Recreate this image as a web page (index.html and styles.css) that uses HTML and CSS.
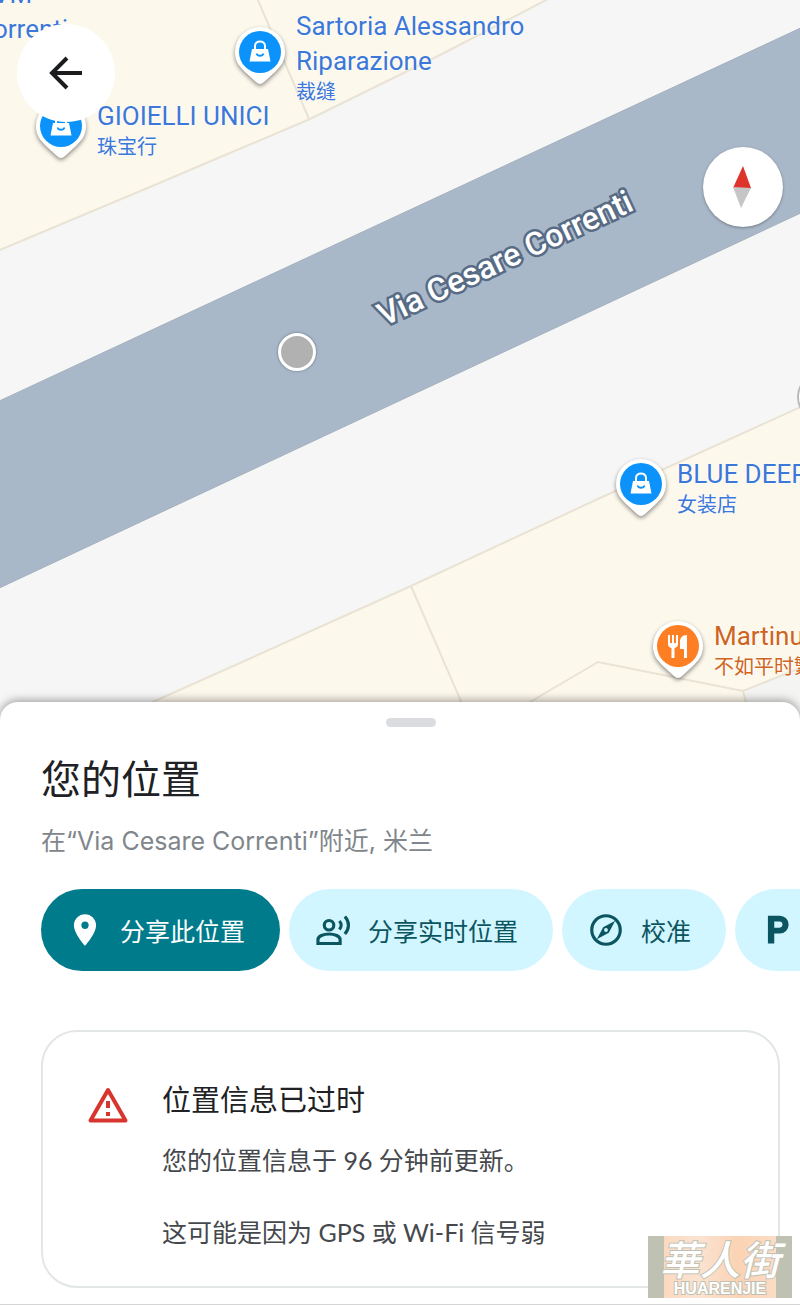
FILE: index.html
```html
<!DOCTYPE html>
<html lang="zh-CN">
<head>
    <meta charset="UTF-8">
    <meta name="viewport" content="width=device-width, initial-scale=1.0">
    <title>您的位置</title>
    <link rel="stylesheet" href="styles.css">
</head>
<body>
    <!-- 图标 -->
    <svg class="sprite" aria-hidden="true">
        <symbol id="pin-shape" viewBox="0 0 56 64">
            <path d="M28 3a25 25 0 0 0-25 25c0 9 4 14 10 20l11 10q4 4 8 0l11-10c6-6 10-11 10-20a25 25 0 0 0-25-25z" fill="#fff"/>
        </symbol>
        <symbol id="pin-shop" viewBox="0 0 56 64">
            <use href="#pin-shape"/>
            <circle cx="28" cy="28" r="21" fill="#0b93fb"/>
            <path d="M20 25h16l2.500 12.500h-21z" fill="#fff"/>
            <path d="M23 26v-4c0-6 10-6 10 0v4" fill="none" stroke="#fff" stroke-width="2"/>
            <path d="M24.500 29.500c1 3 6 3 7 0" fill="none" stroke="#0b93fb" stroke-width="1.800"/>
        </symbol>
        <symbol id="pin-food" viewBox="0 0 56 64">
            <use href="#pin-shape"/>
            <circle cx="28" cy="28" r="21" fill="#fd7e23"/>
            <path d="M18 17h2v8h2v-8h2v8h2v-8h2v9q0 3-3.500 4v10h-3v-10q-3.500-1-3.500-4zM34 40v-9H30v-7c0-4 2-7 7-7v23z" fill="#fff"/>
        </symbol>
    </svg>

    <main>
        <section class="map" aria-label="地图">
            <svg class="terrain" viewBox="0 0 800 720" preserveAspectRatio="xMinYMin slice" aria-hidden="true">
                <rect width="800" height="720" fill="#f6f6f6"/>
                <g fill="#fdf8ec" stroke="#e9e3d4" stroke-width="2">
                    <path d="M-5 252L150 187 310 119 440 55 552-3V-5H-5z"/>
                    <path d="M110 721L240 663 411 586 600 498 805 405V725H110z"/>
                    <path d="M743 691L805 666V725H752z" fill="#f4f4f3"/>
                    <path d="M257-2L309 119M411 586L470 722M500 720L530 702 598 662 743 691" fill="none"/>
                </g>
                <path d="M-5 403L805 26V211L-5 590z" fill="#a9b8c9" stroke="#a3b1bd" stroke-width="1"/>
                <circle cx="822" cy="397" r="24" fill="#fff" stroke="#b9b9b9" stroke-width="2"/>
            </svg>

            <div class="street">Via Cesare Correnti</div>
            <div class="me"></div>

            <div class="poi poi-edge">
                <div class="name"><span class="cut">VM</span><br>Correnti</div>
            </div>
            <div class="poi poi-sartoria">
                <svg><use href="#pin-shop"/></svg>
                <div class="name">Sartoria Alessandro<br>Riparazione<small>裁缝</small></div>
            </div>
            <div class="poi poi-gioielli">
                <svg><use href="#pin-shop"/></svg>
                <div class="name">GIOIELLI UNICI<small>珠宝行</small></div>
            </div>
            <div class="poi poi-blue">
                <svg><use href="#pin-shop"/></svg>
                <div class="name">BLUE DEEP<small>女装店</small></div>
            </div>
            <div class="poi poi-martinucci">
                <svg><use href="#pin-food"/></svg>
                <div class="name">Martinucci<small>不如平时繁忙</small></div>
            </div>

            <button class="back" aria-label="返回">
                <svg viewBox="0 0 40 40"><path d="M36 20H6M21 5L6 20l15 15" fill="none" stroke="#1b1c1e" stroke-width="4"/></svg>
            </button>
            <button class="compass" aria-label="指南针">
                <svg viewBox="0 0 44 44"><path d="M22 1l8 22H12z" fill="#df342c"/><path d="M12 22l18 1-10 20z" fill="#c6c6c6"/></svg>
            </button>
        </section>

        <section class="sheet">
            <div class="handle"></div>
            <h1>您的位置</h1>
            <p class="near">在“Via Cesare Correnti”附近, 米兰</p>

            <div class="chips">
                <button class="chip primary">
                    <svg viewBox="0 0 24 24"><path fill-rule="evenodd" d="M12 2C8.130 2 5 5.130 5 9c0 5.250 7 13 7 13s7-7.750 7-13c0-3.870-3.130-7-7-7zm0 9.300a2.300 2.300 0 1 1 0-4.600 2.300 2.300 0 0 1 0 4.600z"/></svg>
                    <span>分享此位置</span>
                </button>
                <button class="chip">
                    <svg viewBox="0 0 24 24"><g fill="none" stroke="currentColor" stroke-width="2"><circle cx="9.500" cy="9" r="3"/><path d="M2.500 20.500v-2.500c0-2 3.500-3.500 7-3.500s7 1.500 7 3.500v2.500z"/><path d="M16 6.300c1.500 1.600 1.500 3.800 0 5.400M19.500 3.500c3 3.300 3 7.700 0 11"/></g></svg>
                    <span>分享实时位置</span>
                </button>
                <button class="chip">
                    <svg viewBox="0 0 24 24"><circle cx="12" cy="12" r="9" fill="none" stroke="currentColor" stroke-width="2"/><path fill-rule="evenodd" d="M17.800 6.200l-4 7.600-7.600 4 4-7.600zM12 10.800a1.200 1.200 0 1 0 0 2.400 1.200 1.200 0 0 0 0-2.400z"/></svg>
                    <span>校准</span>
                </button>
                <button class="chip">
                    <svg viewBox="0 0 24 24"><path fill-rule="evenodd" d="M5 3h7.500a5.600 5.600 0 0 1 0 11.200H9V20.500H5zm4 3.700v3.800h3.300a1.900 1.900 0 0 0 0-3.800z"/></svg>
                    <span>停车</span>
                </button>
            </div>

            <div class="card">
                <svg class="warn" viewBox="0 0 42 38"><path d="M21 4L38.500 34.500h-35z" fill="none" stroke="#d8352e" stroke-width="4" stroke-linejoin="round"/><path d="M21 15v7M21 26v4" stroke="#d8352e" stroke-width="4"/></svg>
                <div class="card-text">
                    <h2>位置信息已过时</h2>
                    <p>您的位置信息于 96 分钟前更新。</p>
                    <p>这可能是因为 GPS 或 Wi-Fi 信号弱</p>
                </div>
            </div>

            <div class="watermark">
                <span class="brand">華人街</span>
                <span class="latin">HUARENJIE</span>
            </div>
        </section>
    </main>
</body>
</html>
```
FILE: styles.css
```css
* {
    box-sizing: border-box;
}

body {
    margin: 0;
    background: #fff;
    color: #202124;
    font-family: Lato, "Noto Sans CJK SC", sans-serif;
    overflow-x: hidden;
}

button {
    border: none;
    cursor: pointer;
    font-family: inherit;
}

.sprite {
    position: absolute;
    width: 0;
    height: 0;
}

/* 地图 */
.map {
    position: relative;
    height: 720px;
    overflow: hidden;
    font-family: Roboto, "Noto Sans CJK SC", sans-serif;
}

.terrain {
    display: block;
    width: 100%;
    height: 100%;
}

.street {
    position: absolute;
    left: 505px;
    top: 258px;
    transform: translate(-50%, -50%) rotate(-25deg);
    white-space: nowrap;
    font-size: 32px;
    font-weight: 500;
    line-height: 36px;
    color: #fff;
    -webkit-text-stroke: 5px #576b85;
    paint-order: stroke fill;
}

.me {
    position: absolute;
    left: 278px;
    top: 333px;
    width: 38px;
    height: 38px;
    border: 3px solid #fff;
    border-radius: 50%;
    background: #b1b1b1;
    box-shadow: 0 0 3px rgba(0,0,0,0.4);
}

.poi {
    position: absolute;
    display: flex;
    gap: 8px;
    color: #3c78d8;
    white-space: nowrap;
}

.poi svg {
    width: 56px;
    height: 64px;
    filter: drop-shadow(0 2px 2px rgba(0,0,0,0.45));
}

.poi .name {
    margin-top: 1px;
    font-size: 26px;
    line-height: 35px;
    text-shadow: 0 0 2px #fff, 0 0 2px #fff;
}

.poi small {
    display: block;
    font-size: 20px;
    line-height: 26px;
}

.poi-edge {
    left: -24px;
    top: -24px;
}

.poi-edge .cut {
    margin-left: 17px;
}

.poi-sartoria {
    left: 232px;
    top: 24px;
}

.poi-sartoria .name {
    margin-top: -15px;
}

.poi-gioielli {
    left: 33px;
    top: 98px;
}

.poi-blue {
    left: 613px;
    top: 456px;
}

.poi-martinucci {
    left: 650px;
    top: 618px;
    color: #cf6420;
}

.back,
.compass {
    position: absolute;
    display: flex;
    align-items: center;
    justify-content: center;
    padding: 0;
    border-radius: 50%;
    background: #fff;
}

.back {
    left: 17px;
    top: 24px;
    width: 98px;
    height: 98px;
}

.back svg {
    width: 40px;
    height: 40px;
}

.compass {
    right: 17px;
    top: 147px;
    width: 80px;
    height: 80px;
    box-shadow: 0 1px 3px rgba(0,0,0,0.35);
}

.compass svg {
    width: 44px;
    height: 44px;
}

/* 底部面板 */
.sheet {
    position: relative;
    margin-top: -18px;
    padding: 16px 20px 16px 41px;
    border-bottom: 1px solid #d5d5d5;
    border-radius: 18px 18px 0 0;
    background: #fff;
    box-shadow: 0 -2px 8px rgba(0,0,0,0.35);
}

.handle {
    width: 50px;
    height: 9px;
    margin: 0 auto;
    border-radius: 5px;
    background: #dadce0;
}

h1 {
    margin: 22px 0 0;
    font-size: 40px;
    font-weight: 400;
    line-height: 60px;
}

.near {
    margin: 12px 0 0;
    font-family: Inter, "Noto Sans CJK SC", sans-serif;
    font-size: 25px;
    line-height: 40px;
    color: #80868b;
}

.chips {
    display: flex;
    gap: 9px;
    margin: 28px -20px 0 0;
    overflow: hidden;
}

.chip {
    display: flex;
    flex: none;
    align-items: center;
    gap: 16px;
    height: 82px;
    padding: 0 35px 0 25px;
    border-radius: 41px;
    background: #d2f6ff;
    color: #0b5560;
    font-size: 25px;
}

.chip svg {
    width: 38px;
    height: 38px;
    fill: currentColor;
}

.chip.primary {
    background: #007b8b;
    color: #fff;
}

.card {
    display: flex;
    gap: 33px;
    margin-top: 59px;
    padding: 46px 44px 36px;
    border: 2px solid #e3e6e6;
    border-radius: 36px;
}

.warn {
    flex: none;
    width: 42px;
    height: 38px;
    margin-top: 8px;
}

h2 {
    margin: 0;
    font-size: 29px;
    font-weight: 400;
    line-height: 44px;
}

.card p {
    margin: 20px 0 36px;
    font-size: 25px;
    line-height: 36px;
    color: #45484c;
}

.card p:last-child {
    margin: 0;
}

.watermark {
    position: absolute;
    right: 8px;
    bottom: 6px;
    display: flex;
    flex-direction: column;
    align-items: center;
    width: 144px;
    height: 62px;
    background: linear-gradient(90deg, #bfc1b3 16px, #fbd9c0 16px, #fbe3d2 50px, #fbd3b4 90px, #fbdcc6 128px, #bfc1b3 128px);
    color: #fff;
    -webkit-text-stroke: 2px #bfc1b3;
    paint-order: stroke fill;
}

.brand {
    font-family: "Noto Sans CJK TC", sans-serif;
    font-size: 40px;
    font-style: italic;
    font-weight: 500;
    line-height: 44px;
}

.latin {
    font-family: "Liberation Sans", sans-serif;
    font-size: 16px;
    font-weight: 700;
    line-height: 18px;
}
```
